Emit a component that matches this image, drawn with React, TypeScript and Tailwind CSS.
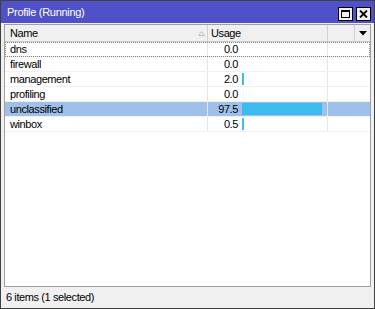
import React from "react";

const rows = [
  { name: "dns", usage: 0.0 },
  { name: "firewall", usage: 0.0 },
  { name: "management", usage: 2.0 },
  { name: "profiling", usage: 0.0 },
  { name: "unclassified", usage: 97.5 },
  { name: "winbox", usage: 0.5 },
];

export default function App() {
  return (
    <div className="w-[375px] h-[309px] border border-[#404040] bg-[#f0f0f0] flex flex-col font-['Liberation_Sans',Arial,sans-serif] text-[11px] tracking-[-0.4px] text-black leading-none">
      <div className="h-[22px] bg-[#5050c8] flex items-center justify-between pl-[6px] pr-[3px]">
        <span className="text-white text-[11px] tracking-[-0.3px]">Profile (Running)</span>
        <div className="flex gap-[3px] mt-[3px]">
          <div className="w-[15px] h-[14px] border border-black bg-[#f0f0f0] flex items-center justify-center">
            <div className="w-[9px] h-[8px] border border-black border-t-2"></div>
          </div>
          <div className="w-[15px] h-[14px] border border-black bg-[#f0f0f0] flex items-center justify-center">
            <svg width="9" height="8" viewBox="0 0 9 8">
              <path d="M1 0.5 L8 7.5 M8 0.5 L1 7.5" stroke="#000" strokeWidth="1.8" />
            </svg>
          </div>
        </div>
      </div>
      <div className="flex-1 flex flex-col px-[3px] pt-[1px]">
        <div className="flex-1 border border-[#a0a0a0] bg-white flex flex-col">
          <div className="h-[17px] flex bg-[#f0f0f0] border-b border-[#c8c8c8]">
            <div className="w-[203px] border-r border-[#d0d0d0] flex items-center pl-[5px] relative">
              <span>Name</span>
              <svg className="absolute left-[193px] top-[6px]" width="7" height="5" viewBox="0 0 7 5">
                <path d="M3.5 0.5 L6.5 4.5 L0.5 4.5 Z" fill="none" stroke="#c0c0c0" strokeWidth="1" />
              </svg>
            </div>
            <div className="w-[120px] border-r border-[#d0d0d0] flex items-center pl-[3px]">
              <span>Usage</span>
            </div>
            <div className="w-[27px] border-r border-[#d0d0d0]"></div>
            <div className="w-[15px] flex items-center justify-center">
              <svg width="8" height="5" viewBox="0 0 8 5">
                <path d="M0 0 L8 0 L4 4.5 Z" fill="#000" />
              </svg>
            </div>
          </div>
          {rows.map((r, i) => {
            const sel = r.name === "unclassified";
            const w = r.usage > 0 ? Math.max(2, Math.round(r.usage * 0.82)) : 0;
            return (
              <div
                key={r.name}
                className={
                  "h-[15px] flex border-b border-[#f0f0f0] " +
                  (sel ? "bg-[#9fc0e8] " : "") +
                  (i === 0 ? "outline-1 outline-dotted outline-[#808080] -outline-offset-1" : "")
                }
              >
                <div className="w-[203px] border-r border-[#e6e6e6] flex items-center pl-[5px]">
                  {r.name}
                </div>
                <div className="w-[120px] border-r border-[#e6e6e6] flex items-center">
                  <span className="w-[30px] text-right">{r.usage.toFixed(1)}</span>
                  {w > 0 && (
                    <div className="ml-[4px] h-[12px] bg-[#3cbcee]" style={{ width: w }}></div>
                  )}
                </div>
                <div className="flex-1"></div>
              </div>
            );
          })}
        </div>
      </div>
      <div className="h-[21px] flex items-center pl-[5px]">6 items (1 selected)</div>
    </div>
  );
}
